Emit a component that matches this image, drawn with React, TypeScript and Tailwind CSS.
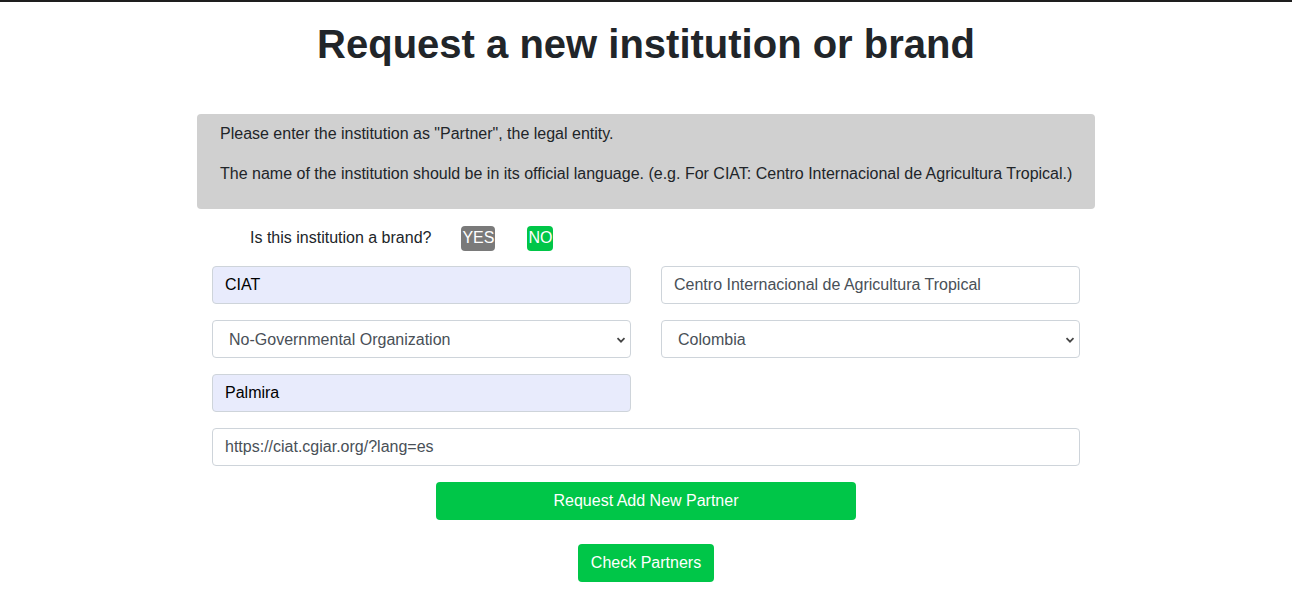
const font = { fontFamily: '"Liberation Sans", Arial, sans-serif' };

function Field({ value, filled }: { value: string; filled?: boolean }) {
  return (
    <div
      className={`h-[38px] flex items-center rounded border border-[#ced4da] px-3 text-base ${
        filled ? "bg-[#e8ebfc] text-black" : "bg-white text-[#495057]"
      }`}
    >
      {value}
    </div>
  );
}

function Select({ value }: { value: string }) {
  return (
    <div className="h-[38px] flex items-center justify-between rounded border border-[#ced4da] bg-white pl-4 pr-[4px] pt-[2px] text-base text-[#495057]">
      <span>{value}</span>
      <svg width="10" height="10" viewBox="0 0 10 10" className="text-[#444]">
        <path d="M1.5 3.2 L5 6.7 L8.5 3.2" fill="none" stroke="currentColor" strokeWidth="1.7" />
      </svg>
    </div>
  );
}

export default function App() {
  return (
    <div className="min-h-[600px] bg-white text-[#212529]" style={font}>
      <div className="h-[2px] bg-[#1e1e1e]" />
      <h1 className="mt-[18px] text-center text-[40px] font-bold leading-[48px] text-[#212529]">
        Request a new institution or brand
      </h1>

      <div className="mx-auto mt-[46px] w-[898px]">
        <div className="rounded bg-[#d0d0d0] pl-[23px] pr-4 pt-2 pb-[23px] text-base leading-6">
          <p className="mb-4">Please enter the institution as "Partner", the legal entity.</p>
          <p>
            The name of the institution should be in its official language. (e.g. For CIAT: Centro Internacional de
            Agricultura Tropical.)
          </p>
        </div>

        <div className="mt-4 flex items-center pl-[53px] h-[26px]">
          <span className="text-base">Is this institution a brand?</span>
          <span className="ml-[30px] rounded bg-[#7a7a7a] px-[1px] h-[25px] w-[34px] flex items-center justify-center text-base text-white">
            YES
          </span>
          <span className="ml-8 rounded bg-[#00c648] h-[25px] w-[26px] flex items-center justify-center text-base text-white">
            NO
          </span>
        </div>

        <div className="mt-[15px] grid grid-cols-2 gap-x-[30px] gap-y-4 px-[15px]">
          <Field value="CIAT" filled />
          <Field value="Centro Internacional de Agricultura Tropical" />
          <Select value="No-Governmental Organization" />
          <Select value="Colombia" />
          <Field value="Palmira" filled />
          <div />
          <div className="col-span-2">
            <Field value="https://ciat.cgiar.org/?lang=es" />
          </div>
        </div>

        <div className="mt-4 flex justify-center">
          <button className="h-[38px] w-[420px] rounded bg-[#00c648] text-base text-white">
            Request Add New Partner
          </button>
        </div>
        <div className="mt-6 flex justify-center">
          <button className="h-[38px] w-[136px] rounded bg-[#00c648] text-base text-white">Check Partners</button>
        </div>
      </div>
    </div>
  );
}
